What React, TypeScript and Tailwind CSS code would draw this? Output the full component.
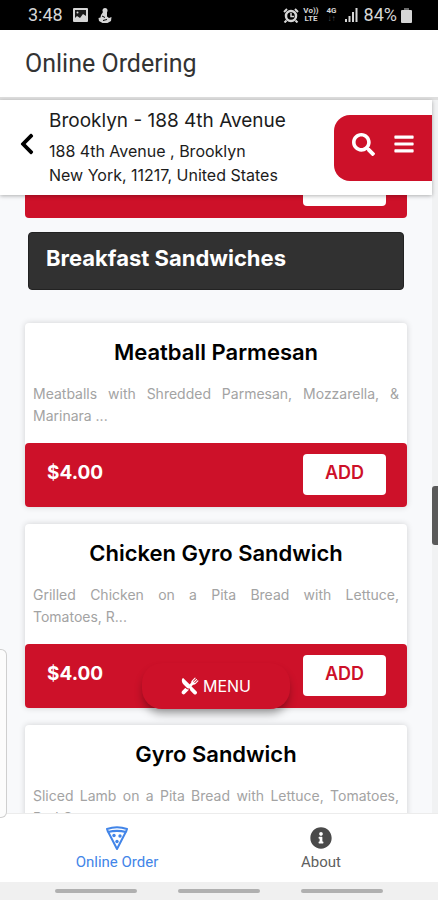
import { FaBars, FaChevronLeft, FaInfoCircle, FaSearch } from "react-icons/fa";
import { IoRestaurant } from "react-icons/io5";

type MenuItem = {
  id: string;
  name: string;
  description: string;
  price: string;
};

const items: MenuItem[] = [
  {
    id: "meatball-parmesan",
    name: "Meatball Parmesan",
    description: "Meatballs with Shredded Parmesan, Mozzarella, & Marinara ...",
    price: "$4.00",
  },
  {
    id: "chicken-gyro",
    name: "Chicken Gyro Sandwich",
    description: "Grilled Chicken on a Pita Bread with Lettuce, Tomatoes, R...",
    price: "$4.00",
  },
  {
    id: "gyro",
    name: "Gyro Sandwich",
    description: "Sliced Lamb on a Pita Bread with Lettuce, Tomatoes, Red O...",
    price: "$4.00",
  },
];

function AlarmIcon() {
  return (
    <svg viewBox="0 0 16 15" className="h-[15px] w-4" fill="none" stroke="currentColor">
      <path d="M1 4l3-3M15 4l-3-3M3.500 12.500L1.500 14.500M12.500 12.500l2 2" strokeWidth="2" />
      <circle cx="8" cy="8" r="5" strokeWidth="2.500" />
      <path d="M8 5v3.500h3" strokeWidth="1.500" />
    </svg>
  );
}

function StatusBar() {
  return (
    <div className="flex h-[30px] shrink-0 items-center justify-between bg-black pr-[26px] pl-7 font-[Roboto,sans-serif] text-[#d6d6d6]">
      <div className="flex items-center gap-[10px]">
        <span className="text-lg">3:48</span>
        <svg viewBox="0 0 15 14" className="h-[14px] w-[15px]">
          <rect width="15" height="14" rx="1" fill="currentColor" />
          <path d="M2 2h11v6l-3-2-3 4-3-2-2 2z" fill="#1a1a1a" />
          <circle cx="4.500" cy="4.500" r="1" fill="currentColor" />
        </svg>
        <svg viewBox="0 0 14 15" className="h-[15px] w-[14px]" fill="currentColor">
          <circle cx="7" cy="2.600" r="2.500" />
          <path d="M5 4h4v4.500l2 1.500 2.500-1-.5 4-3.500 2h-5L1 13 .5 10l2-.5L3 7z" />
          <path d="M4 8l3 1.500M5 12.500l4-1" fill="none" stroke="#000" strokeWidth="1" />
        </svg>
      </div>
      <div className="flex items-center">
        <AlarmIcon />
        <span className="ml-1 text-center text-[8px] leading-[8px] font-bold">
          Vo))
          <br />
          LTE
        </span>
        <span className="ml-2 text-center text-[8px] leading-[8px] font-bold">
          4G
          <br />
          <span className="text-[#555]">↓↑</span>
        </span>
        <svg viewBox="0 0 13 14" className="ml-2 h-[14px] w-[13px]" fill="currentColor">
          <path d="M0 11h2v3H0zM3.500 8h2v6h-2zM7 4h2v10H7zM10.500 0h2v14h-2z" />
        </svg>
        <span className="ml-[6px] text-lg">84%</span>
        <svg viewBox="0 0 11 15" className="ml-1 h-[15px] w-[11px]" fill="currentColor">
          <path d="M3 0h5v2H3z" opacity=".5" />
          <rect y="2" width="11" height="13" rx="1" />
        </svg>
      </div>
    </div>
  );
}

function PizzaIcon() {
  return (
    <svg viewBox="0 0 24 24" className="size-6" fill="none" stroke="currentColor" strokeWidth="2">
      <path d="M2 3c6-2 14-2 20 0l-1 3C15 4.500 9 4.500 3 6z" strokeLinejoin="round" />
      <path d="M3.500 6.500L12 23l8.500-16.500" strokeLinejoin="round" />
      <g fill="currentColor" stroke="none">
        <circle cx="9" cy="9.500" r="1.700" />
        <circle cx="15" cy="10" r="1.700" />
        <circle cx="12" cy="15.500" r="1.700" />
      </g>
    </svg>
  );
}

function ItemCard({ item }: { item: MenuItem }) {
  return (
    <article className="shrink-0 rounded-[4px] bg-white shadow-[0_0_6px_rgba(0,0,0,0.16)]">
      <div className="px-2 pt-[15px] pb-4">
        <h3 className="text-center text-[22px] leading-7 font-semibold text-black">
          {item.name}
        </h3>
        <p className="mt-[17px] h-11 text-justify text-sm leading-[22px] text-[#a3a3a3]">
          {item.description}
        </p>
      </div>
      <div className="flex h-16 items-start justify-between rounded-[4px] bg-[#cd1129] pt-[11px] pr-[21px] pl-[22px]">
        <span className="text-[19px] leading-[38px] font-bold text-white">
          {item.price}
        </span>
        <button
          type="button"
          aria-label={`Add ${item.name}`}
          className="h-[41px] w-[83px] rounded-[4px] bg-white pb-1 text-lg font-semibold text-[#cd1129]"
        >
          ADD
        </button>
      </div>
    </article>
  );
}

export default function App() {
  return (
    <div className="relative flex h-screen flex-col overflow-hidden bg-white font-[Inter,sans-serif]">
      <StatusBar />
      <header className="flex h-[70px] shrink-0 items-center border-b-[3px] border-[#dedede] px-[25px] font-[Roboto,sans-serif]">
        <h1 className="text-[25px] text-[#333]">Online Ordering</h1>
      </header>

      <div className="flex min-h-0 flex-1 bg-[#f1f2f3]">
        <main className="relative flex min-w-0 flex-1 flex-col bg-[#f8f9fb]">
          <div className="z-10 flex h-[95px] shrink-0 items-center bg-white shadow-[0_1px_4px_rgba(0,0,0,0.3)]">
            <button type="button" aria-label="Back" className="ml-[15px] shrink-0 pb-2">
              <FaChevronLeft className="size-6 text-black" />
            </button>
            <div className="ml-[10px] min-w-0 flex-1 pb-[2px] text-[#1c1c1c]">
              <h2 className="text-[19px] leading-7 whitespace-nowrap">
                Brooklyn - 188 4th Avenue
              </h2>
              <address className="mt-1 text-base leading-6 whitespace-nowrap not-italic">
                188 4th Avenue , Brooklyn
                <br />
                New York, 11217, United States
              </address>
            </div>
            <div className="flex h-[66px] w-[98px] shrink-0 items-center gap-[18px] rounded-l-[16px] bg-[#cd1129] pb-[7px] pl-[18px] text-white">
              <button type="button" aria-label="Search">
                <FaSearch className="size-[23px]" />
              </button>
              <button type="button" aria-label="Open menu">
                <FaBars className="size-[22px]" />
              </button>
            </div>
          </div>

          <div className="flex min-h-0 flex-1 flex-col overflow-hidden px-[25px]">
            {/* tail of the item scrolled under the header */}
            <div className="flex h-[23px] shrink-0 items-start justify-end rounded-b-[4px] bg-[#cd1129] pr-[21px]">
              <div className="h-[11px] w-[83px] rounded-b-[4px] bg-white" />
            </div>
            <h2 className="mx-[3px] mt-[14px] h-[58px] shrink-0 rounded-[4px] border border-[#222] bg-[#313131] px-[17px] pt-[7px] text-[22px] leading-9 font-bold text-white">
              Breakfast Sandwiches
            </h2>
            <div className="mt-[33px] flex flex-col gap-[17px]">
              {items.map((item) => (
                <ItemCard key={item.id} item={item} />
              ))}
            </div>
          </div>

          <button
            type="button"
            className="absolute bottom-[104px] left-1/2 flex h-[46px] w-[148px] -translate-x-1/2 items-center justify-center gap-1 rounded-[20px] bg-[#cd1129] text-base text-white shadow-[0_6px_10px_-2px_rgba(0,0,0,0.4)]"
          >
            <IoRestaurant className="size-[18px]" />
            MENU
          </button>
        </main>

        {/* scrollbar */}
        <div className="w-[6px] shrink-0 pt-[386px]">
          <div className="h-[59px] rounded-l-[3px] bg-[#5a5a5a]" />
        </div>
      </div>

      <nav className="grid h-[69px] shrink-0 grid-cols-2 border-t border-[#ececec] bg-white px-[15px] font-[Roboto,sans-serif] text-[15px]">
        <a href="#order" className="flex flex-col items-center pt-3 text-[#4285e8]">
          <PizzaIcon />
          <span className="mt-[2px] leading-5">Online Order</span>
        </a>
        <a href="#about" className="flex flex-col items-center pt-3 text-[#606060]">
          <FaInfoCircle className="my-px size-[22px] text-[#4a4a4a]" />
          <span className="mt-[2px] leading-5">About</span>
        </a>
      </nav>

      <div className="flex h-[18px] shrink-0 items-center justify-center gap-[41px] bg-[#f0f0f0]">
        <span className="h-1 w-[82px] rounded-full bg-[#b0b0b0]" />
        <span className="h-1 w-[82px] rounded-full bg-[#b0b0b0]" />
        <span className="h-1 w-[82px] rounded-full bg-[#b0b0b0]" />
      </div>

      {/* edge panel handle */}
      <div className="absolute bottom-[82px] left-0 h-[169px] w-[7px] rounded-r-[6px] border border-l-0 border-[#cfcfcf] bg-[#fcfcfc]" />
    </div>
  );
}
